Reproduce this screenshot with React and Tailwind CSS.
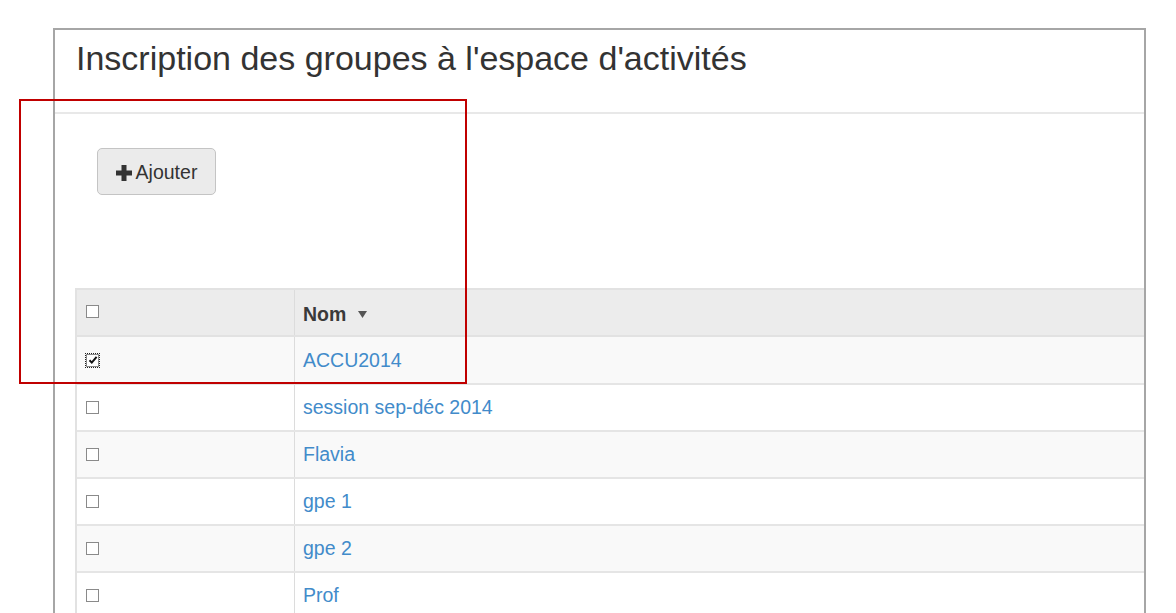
import { Fragment } from "react";

const groups = ["ACCU2014", "session sep-déc 2014", "Flavia", "gpe 1", "gpe 2", "Prof"];

function Box({ checked }) {
  if (checked) {
    return (
      <span className="flex h-[15px] w-[15px] items-center justify-center border border-dotted border-[#222]">
        <span className="flex h-[13px] w-[13px] items-center justify-center border border-[#8a8a8a] bg-white">
          <svg width="10" height="10" viewBox="0 0 10 10">
            <path d="M1.5 5.2 L3.8 7.6 L8.6 1.8" fill="none" stroke="#111" strokeWidth="2" />
          </svg>
        </span>
      </span>
    );
  }
  return <span className="block h-[13px] w-[13px] border border-[#8a8a8a] bg-white" />;
}

export default function App() {
  return (
    <div className="relative h-[613px] w-[1176px] overflow-hidden bg-white font-['Liberation_Sans',Arial,sans-serif] text-[#333]">
      <div className="ml-[53px] mt-[28px] h-[600px] w-[1093px] border-2 border-b-0 border-[#a6a6a6]">
        {/* panel heading */}
        <div className="h-[82px] pl-[21px] pt-[8px]">
          <h1 className="text-[34px] leading-[40px] text-[#333]">
            Inscription des groupes à l'espace d'activités
          </h1>
        </div>
        <div className="h-[2px] bg-[#e8e8e8]" />

        {/* body */}
        <div className="pl-[42px] pt-[34px]">
          <button className="flex h-[47px] w-[119px] items-center justify-center gap-[4px] rounded-[5px] border border-[#c4c4c4] bg-[#ebebeb] pt-[2px] text-[19.5px] text-[#333]">
            <svg width="16" height="16" viewBox="0 0 16 16">
              <path d="M5.5 0h5v5.5H16v5h-5.5V16h-5v-5.5H0v-5h5.5z" fill="#333" />
            </svg>
            Ajouter
          </button>
        </div>

        <div className="ml-[20px] mt-[93px] border-l-2 border-[#e2e2e2] text-[19.5px]">
          {/* header */}
          <div className="flex h-[49px] border-y-2 border-[#e2e2e2] bg-[#ececec]">
            <div className="flex w-[217px] items-center pl-[9px] pb-[2px]">
              <Box />
            </div>
            <div className="flex flex-1 items-center gap-[12px] border-l border-[#dcdcdc] pl-[8px] pt-[4px] font-bold text-[#3a3a3a]">
              Nom
              <svg width="9" height="7" viewBox="0 0 9 7">
                <path d="M0 0h9L4.5 7z" fill="#555" />
              </svg>
            </div>
          </div>

          {groups.map((name, i) => (
            <div
              key={name}
              className={`flex ${i === 0 ? "h-[46px]" : "h-[47px] border-t-2 border-[#e5e5e5]"} ${
                i % 2 === 0 ? "bg-[#f9f9f9]" : "bg-white"
              }`}
            >
              <div className={`flex w-[217px] items-center ${i === 0 ? "pl-[8px]" : "pl-[9px]"}`}>
                <Box checked={i === 0} />
              </div>
              <div className="flex flex-1 items-center border-l border-[#dcdcdc] pl-[8px] pt-[1px]">
                <a className="text-[#428bca]">{name}</a>
              </div>
            </div>
          ))}
        </div>
      </div>

      {/* annotation */}
      <div className="absolute left-[19px] top-[99px] h-[285px] w-[448px] border-2 border-[#c00000]" />
    </div>
  );
}
